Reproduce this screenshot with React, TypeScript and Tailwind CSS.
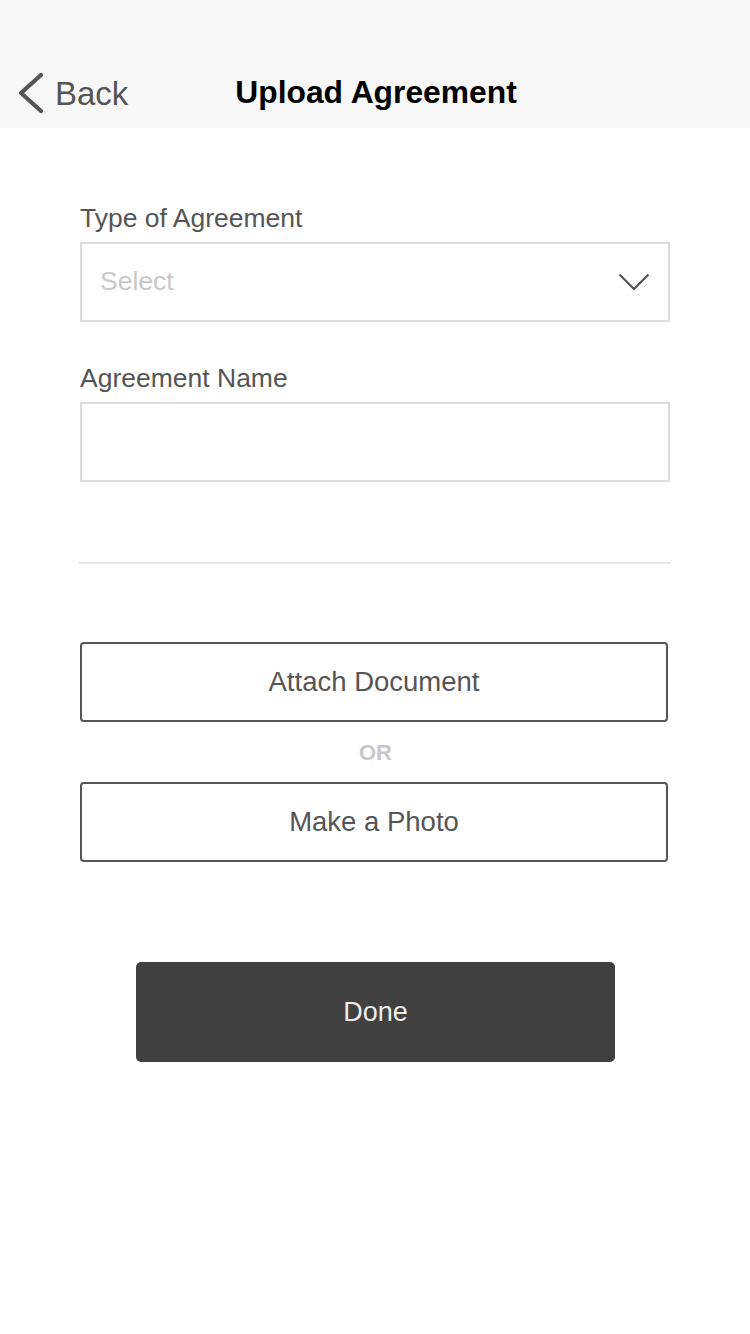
import React from "react";

export default function App() {
  const font = { fontFamily: '"Liberation Sans", Arial, sans-serif' };
  return (
    <div className="w-[750px] min-h-[1334px] bg-white" style={font}>
      <header className="h-[128px] bg-[#f8f8f8] pt-[58px]">
        <div className="relative h-[70px] flex items-center">
          <div className="flex items-center pl-[17px]">
            <svg width="28" height="44" viewBox="0 0 28 44" className="mr-[10px]">
              <polyline points="24,4 4,22 24,40" fill="none" stroke="#555555" strokeWidth="4.2" strokeLinecap="round" strokeLinejoin="round" />
            </svg>
            <span className="text-[33px] leading-none text-[#555555]">Back</span>
          </div>
          <div className="absolute inset-0 flex items-center justify-center pointer-events-none">
            <span className="text-[31.8px] leading-none font-bold text-black pl-[2px]">Upload Agreement</span>
          </div>
        </div>
      </header>

      <main className="w-[590px] mx-[80px] pt-[75px]">
        <label className="block text-[26.5px] leading-[30px] text-[#555555] mb-[9px]">Type of Agreement</label>
        <div className="h-[80px] border-2 border-[#dcdcdc] flex items-center justify-between pl-[18px] pr-[18px]">
          <span className="text-[26.5px] text-[#c8c8c8]">Select</span>
          <svg width="32" height="18" viewBox="0 0 32 18">
            <polyline points="1.5,1.5 16,16 30.5,1.5" fill="none" stroke="#555555" strokeWidth="2.2" />
          </svg>
        </div>

        <label className="block text-[26.5px] leading-[30px] text-[#555555] mt-[41px] mb-[9px]">Agreement Name</label>
        <div className="h-[80px] border-2 border-[#dcdcdc]" />

        <div className="mt-[80px] h-[2px] bg-[#e8e8e8] w-[592px] -ml-px" />

        <button className="mt-[78px] w-[588px] h-[80px] border-2 border-[#555555] rounded-[4px] flex items-center justify-center text-[27.5px] text-[#555555]">
          Attach Document
        </button>
        <div className="h-[60px] w-[588px] flex items-center justify-center text-[22px] font-bold text-[#c8c8c8] pl-[3px]">OR</div>
        <button className="w-[588px] h-[80px] border-2 border-[#555555] rounded-[4px] flex items-center justify-center text-[27.5px] text-[#555555]">
          Make a Photo
        </button>
      </main>

      <div className="flex justify-center mt-[100px] pl-[1px]">
        <button className="w-[479px] h-[100px] bg-[#404040] rounded-[5px] text-[27px] text-[#eeeeee]">Done</button>
      </div>
    </div>
  );
}
